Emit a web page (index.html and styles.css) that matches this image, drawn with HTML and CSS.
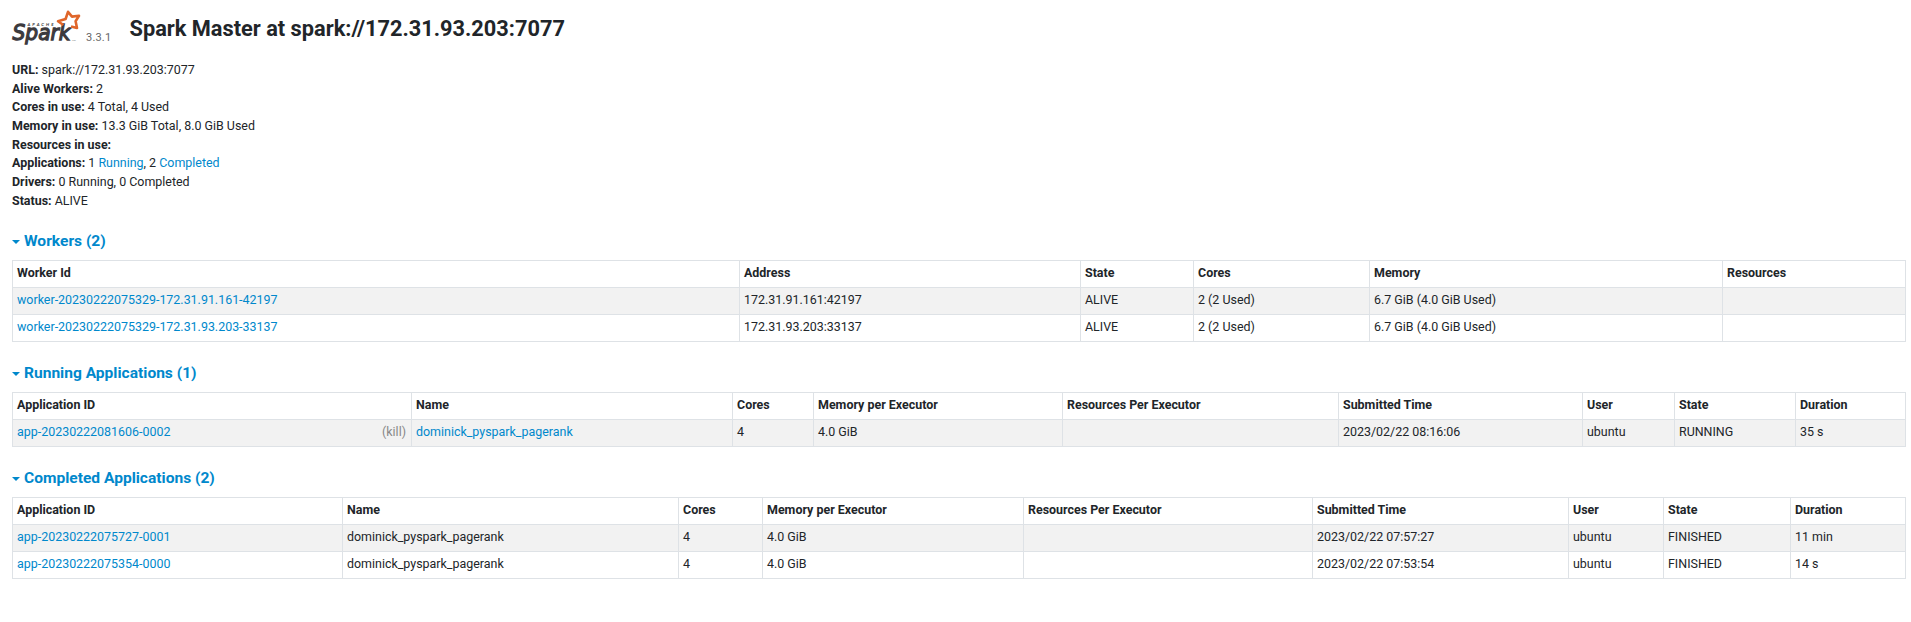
FILE: index.html
```html
<!DOCTYPE html>
<html lang="en">
<head>
<meta charset="utf-8">
<title>Spark Master at spark://172.31.93.203:7077</title>
<link rel="stylesheet" href="styles.css">
</head>
<body>
<div class="container">
  <header class="masthead">
    <a class="brand" href="#">
      <svg class="logo" viewBox="0 0 70 38" width="70" height="38" role="img" aria-label="Apache Spark">
        <text class="logo-small" x="15.5" y="17.6" textLength="26">APACHE</text>
        <text class="logo-word" x="0.5" y="32.4" textLength="58" lengthAdjust="spacingAndGlyphs">Spark</text>
        <text class="logo-tm" x="60" y="32.5">TM</text>
        <path class="logo-star" d="M51.4 17 L46 13.2 L53.6 11 L56 3.8 L60 8.6 L67 7.8 L63.6 13.2 L65 20 L59 18.4"/>
      </svg>
      <span class="version">3.3.1</span>
    </a>
    <h3 class="title">Spark Master at spark://172.31.93.203:7077</h3>
  </header>

  <ul class="summary">
    <li><strong>URL:</strong> spark://172.31.93.203:7077</li>
    <li><strong>Alive Workers:</strong> 2</li>
    <li><strong>Cores in use:</strong> 4 Total, 4 Used</li>
    <li><strong>Memory in use:</strong> 13.3 GiB Total, 8.0 GiB Used</li>
    <li><strong>Resources in use:</strong></li>
    <li><strong>Applications:</strong> 1 <a href="#running">Running</a>, 2 <a href="#completed">Completed</a></li>
    <li><strong>Drivers:</strong> 0 Running, 0 Completed</li>
    <li><strong>Status:</strong> ALIVE</li>
  </ul>

  <section class="section">
    <h4 class="heading"><span class="arrow"></span><a href="#">Workers (2)</a></h4>
    <table class="table">
      <colgroup><col class="w-id"><col class="w-address"><col class="w-state"><col class="w-cores"><col class="w-memory"><col></colgroup>
      <thead><tr><th>Worker Id</th><th>Address</th><th>State</th><th>Cores</th><th>Memory</th><th>Resources</th></tr></thead>
      <tbody>
        <tr><td><a href="#">worker-20230222075329-172.31.91.161-42197</a></td><td>172.31.91.161:42197</td><td>ALIVE</td><td>2 (2 Used)</td><td>6.7 GiB (4.0 GiB Used)</td><td></td></tr>
        <tr><td><a href="#">worker-20230222075329-172.31.93.203-33137</a></td><td>172.31.93.203:33137</td><td>ALIVE</td><td>2 (2 Used)</td><td>6.7 GiB (4.0 GiB Used)</td><td></td></tr>
      </tbody>
    </table>
  </section>

  <section class="section" id="running">
    <h4 class="heading"><span class="arrow"></span><a href="#">Running Applications (1)</a></h4>
    <table class="table">
      <colgroup><col class="r-id"><col class="r-name"><col class="r-cores"><col class="r-memory"><col class="r-resources"><col class="r-time"><col class="r-user"><col class="r-state"><col></colgroup>
      <thead><tr><th>Application ID</th><th>Name</th><th>Cores</th><th>Memory per Executor</th><th>Resources Per Executor</th><th>Submitted Time</th><th>User</th><th>State</th><th>Duration</th></tr></thead>
      <tbody>
        <tr><td><div class="app-id"><a href="#">app-20230222081606-0002</a><a class="kill" href="#">(kill)</a></div></td><td><a href="#">dominick_pyspark_pagerank</a></td><td>4</td><td>4.0 GiB</td><td></td><td>2023/02/22 08:16:06</td><td>ubuntu</td><td>RUNNING</td><td>35 s</td></tr>
      </tbody>
    </table>
  </section>

  <section class="section" id="completed">
    <h4 class="heading"><span class="arrow"></span><a href="#">Completed Applications (2)</a></h4>
    <table class="table">
      <colgroup><col class="c-id"><col class="c-name"><col class="c-cores"><col class="c-memory"><col class="c-resources"><col class="c-time"><col class="c-user"><col class="c-state"><col></colgroup>
      <thead><tr><th>Application ID</th><th>Name</th><th>Cores</th><th>Memory per Executor</th><th>Resources Per Executor</th><th>Submitted Time</th><th>User</th><th>State</th><th>Duration</th></tr></thead>
      <tbody>
        <tr><td><a href="#">app-20230222075727-0001</a></td><td>dominick_pyspark_pagerank</td><td>4</td><td>4.0 GiB</td><td></td><td>2023/02/22 07:57:27</td><td>ubuntu</td><td>FINISHED</td><td>11 min</td></tr>
        <tr><td><a href="#">app-20230222075354-0000</a></td><td>dominick_pyspark_pagerank</td><td>4</td><td>4.0 GiB</td><td></td><td>2023/02/22 07:53:54</td><td>ubuntu</td><td>FINISHED</td><td>14 s</td></tr>
      </tbody>
    </table>
  </section>
</div>
</body>
</html>
```

FILE: styles.css
```css
* { box-sizing: border-box; }
body {
  margin: 0;
  background: #fff;
  color: #212529;
  font-family: Roboto, "Liberation Sans", sans-serif;
  font-size: 12.44px;
  line-height: 18.67px;
}
a { color: #0088cc; text-decoration: none; }
.container { padding: 0 5px 0 12px; }

.masthead { display: flex; height: 61px; }
.brand { display: flex; padding-top: 8px; width: 117.5px; color: #666; }
.logo { display: block; flex: none; overflow: visible; }
.logo-small { font: italic 700 4.3px Lato, sans-serif; fill: #3c3a3e; }
.logo-word { font: italic 400 22px "DejaVu Sans", sans-serif; fill: #3c3a3e; stroke: #3c3a3e; stroke-width: 1.3; }
.logo-tm { font: 2.4px Roboto, sans-serif; fill: #777; }
.logo-star { fill: none; stroke: #e0662a; stroke-width: 2.6; stroke-linejoin: round; }
.version { margin: 21px 0 0 4px; font-size: 11px; line-height: 18px; letter-spacing: 0.2px; }
.title { margin: 14px 0 0; font-size: 21.78px; font-weight: 700; line-height: 30px; }

.summary { margin: 0; padding: 0; list-style: none; height: 150px; }
strong { font-weight: 700; }

.section { padding-top: 21px; }
.summary + .section { padding-top: 20px; }
.heading { display: flex; align-items: center; gap: 4px; margin: 0 0 9px; height: 20px; font-size: 15.56px; font-weight: 700; }
.arrow { margin-top: 2px; border: 4px solid transparent; border-top-color: #0088cc; border-bottom: 0; }

.table { width: 1894px; table-layout: fixed; border-collapse: collapse; }
.table th, .table td { height: 27px; padding: 0 4px 2px; border: 1px solid #dee2e6; text-align: left; line-height: 18px; white-space: nowrap; }
.table tbody tr:nth-child(odd) { background: #f2f2f2; }
.app-id { display: flex; justify-content: space-between; padding-right: 1px; }
.kill { color: #888; }

.w-id { width: 727px; }
.w-address { width: 341px; }
.w-state { width: 113px; }
.w-cores { width: 176px; }
.w-memory { width: 353px; }

.r-id { width: 399px; }
.r-name { width: 321px; }
.r-cores { width: 81px; }
.r-memory { width: 249px; }
.r-resources { width: 276px; }
.r-time { width: 244px; }
.r-user { width: 92px; }
.r-state { width: 121px; }

.c-id { width: 330px; }
.c-name { width: 336px; }
.c-cores { width: 84px; }
.c-memory { width: 261px; }
.c-resources { width: 289px; }
.c-time { width: 256px; }
.c-user { width: 95px; }
.c-state { width: 127px; }
```
